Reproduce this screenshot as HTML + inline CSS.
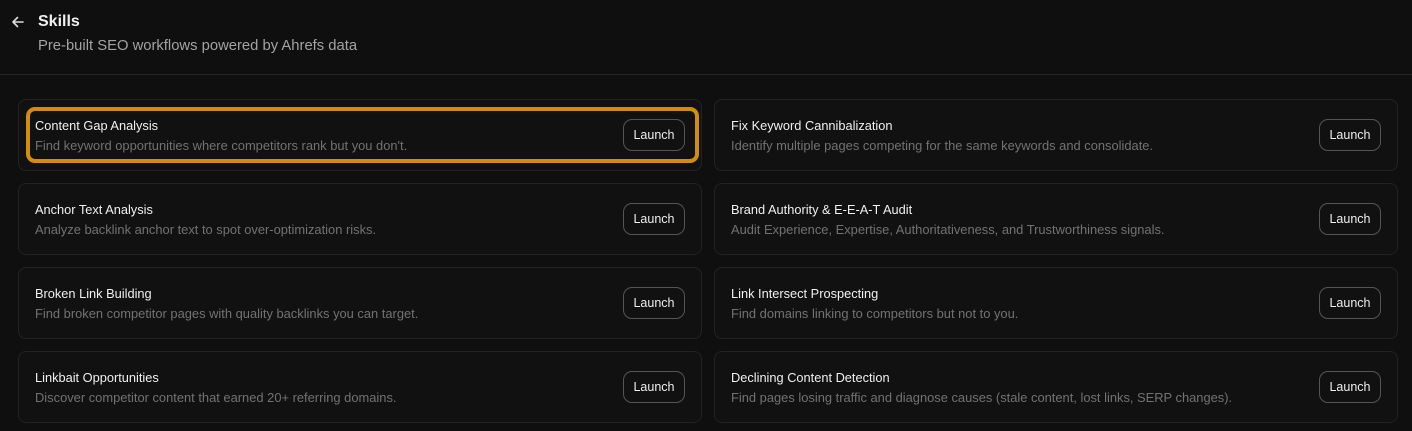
<!DOCTYPE html>
<html><head><style>
*{margin:0;padding:0;box-sizing:border-box}
body{width:1412px;height:431px;background:#0f0f0f;font-family:"Liberation Sans",sans-serif;overflow:hidden;position:relative;color:#ececec}
.hdr{position:absolute;left:0;top:0;width:1412px;height:75px;border-bottom:1px solid #232323}
.back{position:absolute;left:11px;top:15px}
.t{position:absolute;left:38px;top:13px;font-size:16px;font-weight:bold;color:#f0f0f0}
.s{position:absolute;left:38px;top:38px;font-size:14.8px;color:#a3a3a3}
.card{position:absolute;width:684px;height:72px;border:1px solid #232323;border-radius:8px;background:#111}
.card h3{position:absolute;left:16px;top:18px;font-size:12.8px;font-weight:normal;color:#f0f0f0}
.card p{position:absolute;left:16px;top:38px;font-size:12.9px;color:#727272}
.btn{position:absolute;right:16px;top:19px;width:62px;height:32px;border:1px solid #555;border-radius:9px;font-size:12.5px;color:#eee;text-align:center;line-height:30px}
.hl{position:absolute;left:26px;top:107px;width:673px;height:56px;border:4px solid #d18e0b;border-radius:9px}
</style></head><body>
<div class="hdr">
<svg class="back" width="14" height="14" viewBox="0 0 14 14"><path d="M12 7H2M6.5 2.5L2 7l4.5 4.5" stroke="#ddd" stroke-width="1.6" fill="none" stroke-linecap="round" stroke-linejoin="round"/></svg>
<div class="t">Skills</div>
<div class="s">Pre-built SEO workflows powered by Ahrefs data</div>
</div>
<div class="card" style="left:18px;top:99px"><h3>Content Gap Analysis</h3><p>Find keyword opportunities where competitors rank but you don't.</p><div class="btn">Launch</div></div>
<div class="card" style="left:714px;top:99px"><h3>Fix Keyword Cannibalization</h3><p>Identify multiple pages competing for the same keywords and consolidate.</p><div class="btn">Launch</div></div>
<div class="card" style="left:18px;top:183px"><h3>Anchor Text Analysis</h3><p>Analyze backlink anchor text to spot over-optimization risks.</p><div class="btn">Launch</div></div>
<div class="card" style="left:714px;top:183px"><h3>Brand Authority &amp; E-E-A-T Audit</h3><p>Audit Experience, Expertise, Authoritativeness, and Trustworthiness signals.</p><div class="btn">Launch</div></div>
<div class="card" style="left:18px;top:267px"><h3>Broken Link Building</h3><p>Find broken competitor pages with quality backlinks you can target.</p><div class="btn">Launch</div></div>
<div class="card" style="left:714px;top:267px"><h3>Link Intersect Prospecting</h3><p>Find domains linking to competitors but not to you.</p><div class="btn">Launch</div></div>
<div class="card" style="left:18px;top:351px"><h3>Linkbait Opportunities</h3><p>Discover competitor content that earned 20+ referring domains.</p><div class="btn">Launch</div></div>
<div class="card" style="left:714px;top:351px"><h3>Declining Content Detection</h3><p>Find pages losing traffic and diagnose causes (stale content, lost links, SERP changes).</p><div class="btn">Launch</div></div>
<div class="hl"></div>
</body></html>
